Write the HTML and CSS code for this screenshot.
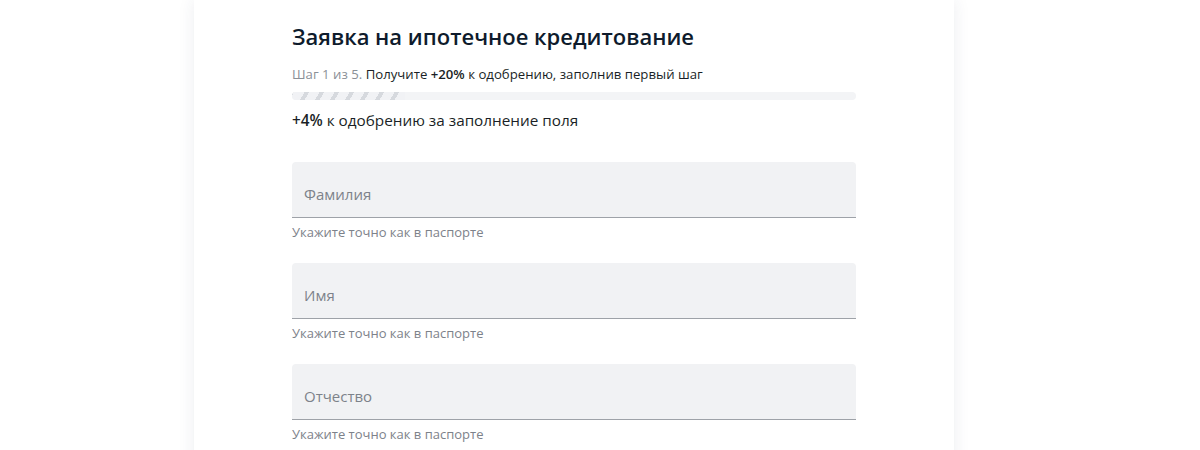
FILE: index.html
```html
<!DOCTYPE html>
<html lang="ru">
<head>
<meta charset="utf-8">
<link rel="stylesheet" href="styles.css">
</head>
<body>
<div class="page">
  <div class="card">
    <div class="content">
      <h1 class="title">Заявка на ипотечное кредитование</h1>
      <p class="step"><span class="muted">Шаг 1 из 5.</span> Получите <b>+20%</b> к одобрению, заполнив первый шаг</p>
      <div class="progress"><div class="progress-fill" style="width: 20%"></div></div>
      <p class="bonus"><b>+4%</b> к одобрению за заполнение поля</p>

      <div class="field">
        <div class="input">Фамилия</div>
        <div class="hint">Укажите точно как в паспорте</div>
      </div>
      <div class="field">
        <div class="input">Имя</div>
        <div class="hint">Укажите точно как в паспорте</div>
      </div>
      <div class="field">
        <div class="input">Отчество</div>
        <div class="hint">Укажите точно как в паспорте</div>
      </div>
    </div>
  </div>
</div>
</body>
</html>
```

FILE: styles.css
```css
html, body {
  margin: 0;
  padding: 0;
  background: #ffffff;
  font-family: "Open Sans", "Noto Sans", sans-serif;
}
.page {
  width: 1200px;
  height: 450px;
  overflow: hidden;
  display: flex;
  justify-content: flex-start;
}
.card {
  margin-left: 194px;
  width: 760px;
  height: 480px;
  background: #fff;
  box-shadow: 0 0 16px rgba(40, 50, 90, 0.09);
}
.content {
  margin-left: 98px;
  width: 564px;
  padding-top: 19px;
}
.title {
  margin: 0;
  font-size: 22px;
  line-height: 34px;
  font-weight: 600;
  color: #0e1b2c;
}
.step {
  margin: 12px 0 0;
  font-size: 13.2px;
  line-height: 18px;
  color: #1a1f26;
}
.step b { font-weight: 600; }
.muted { color: #8b9097; }
.progress {
  margin-top: 9px;
  height: 8px;
  border-radius: 4px;
  background: #f3f4f6;
  overflow: hidden;
}
.progress-fill {
  height: 100%;
  background: repeating-linear-gradient(-60deg, #f1f2f5 0 9px, #d6d9de 9px 13px);
}
.bonus {
  margin: 9px 0 0;
  font-size: 15.3px;
  line-height: 22px;
  color: #1a1f26;
}
.bonus b { font-weight: 600; }
.field {
  margin-top: 31px;
}
.field + .field {
  margin-top: 22px;
}
.input {
  height: 56px;
  box-sizing: border-box;
  background: #f1f2f4;
  border-bottom: 1px solid #9ea2a8;
  border-radius: 4px 4px 0 0;
  padding: 8px 12px 0;
  display: flex;
  align-items: center;
  font-size: 15px;
  color: #7d828a;
}
.hint {
  margin-top: 5px;
  font-size: 13px;
  line-height: 18px;
  color: #7d828a;
}
```
